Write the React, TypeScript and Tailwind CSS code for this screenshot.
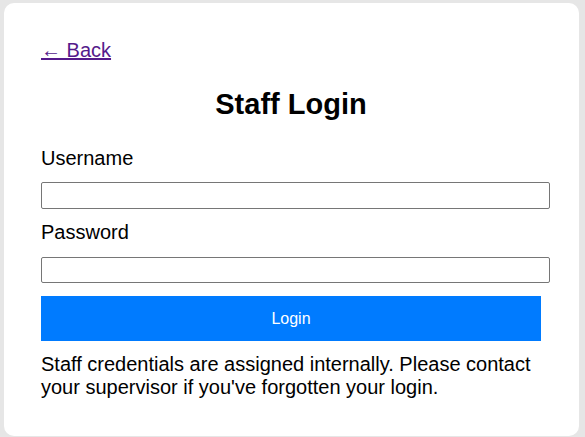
export default function App() {
  return (
    <div className="min-h-[437px] bg-[#e6e6e6] pt-[3px] pl-[4px] pr-[6px] pb-[1px] font-['Liberation_Sans',Arial,sans-serif] text-black">
      <div className="bg-white rounded-[10px] pt-[36px] pb-[37px] pl-[37px] pr-[38px]">
        <a href="#" className="block w-fit text-[20px] leading-[23px] text-[#551a8b] underline">
          ← Back
        </a>
        <h2 className="mt-[26px] text-center text-[29px] leading-[33px] font-bold">Staff Login</h2>
        <form className="mt-[26px]" onSubmit={(e) => e.preventDefault()}>
          <label className="block text-[20px] leading-[23px] mb-[12px]">Username</label>
          <input
            type="text"
            className="block w-[calc(100%+9px)] h-[27px] border border-[#767676] rounded-[2px] mb-[12px]"
          />
          <label className="block text-[20px] leading-[23px] mb-[13px]">Password</label>
          <input
            type="password"
            className="block w-[calc(100%+9px)] h-[26px] border border-[#767676] rounded-[2px] mb-[13px]"
          />
          <button type="submit" className="block w-full h-[45px] bg-[#007bff] text-white text-[16px]">
            Login
          </button>
        </form>
        <p className="mt-[12px] text-[20px] leading-[23px]">
          Staff credentials are assigned internally. Please contact your supervisor if you've forgotten your login.
        </p>
      </div>
    </div>
  );
}
